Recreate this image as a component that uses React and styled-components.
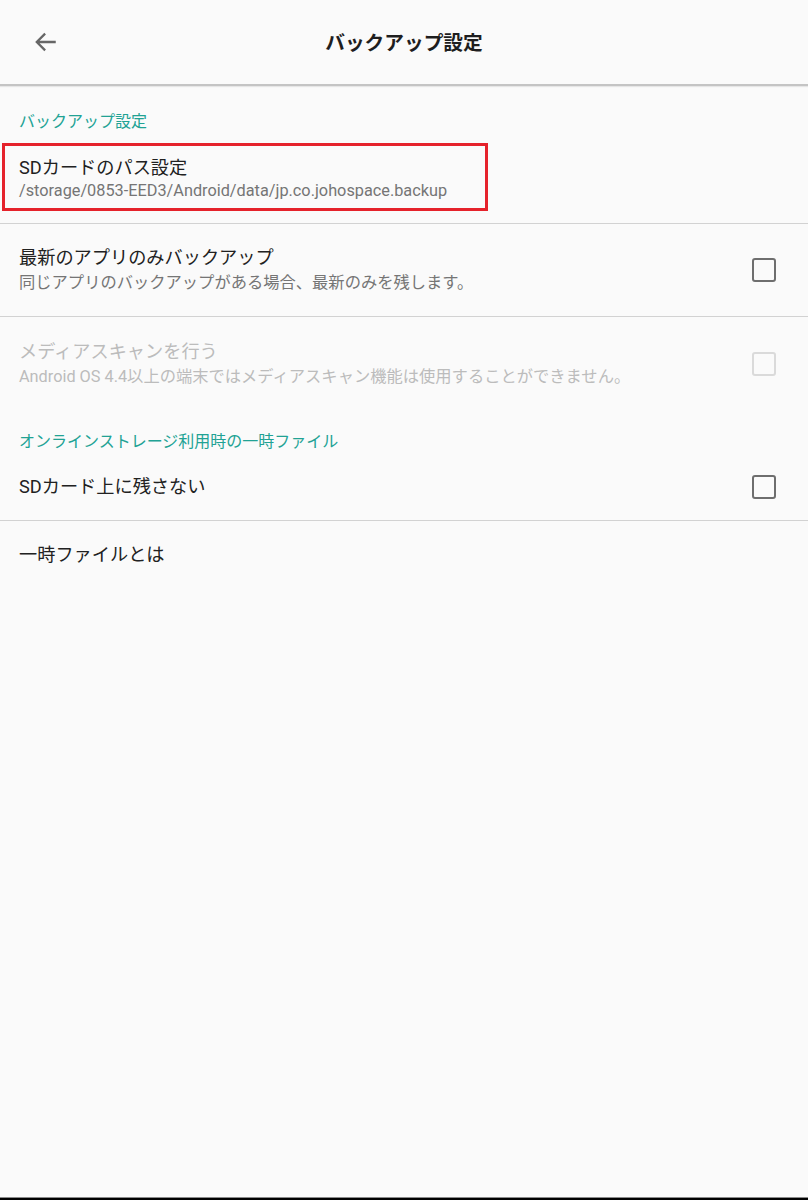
import React from "react";
import styled, { createGlobalStyle } from "styled-components";

const GlobalStyle = createGlobalStyle`
  html, body {
    margin: 0;
    padding: 0;
    background: #fafafa;
  }
  body {
    font-family: "Roboto", "Noto Sans CJK JP", sans-serif;
    color: #212121;
  }
`;

const Page = styled.div`
  min-height: 1200px;
  display: flex;
  flex-direction: column;
  background: #fafafa;
`;

const Toolbar = styled.header`
  height: 84px;
  display: flex;
  align-items: center;
  position: relative;
  border-bottom: 2px solid #c4c4c4;
  box-shadow: 0 1px 1px rgba(0, 0, 0, 0.08);
`;

const BackButton = styled.button`
  width: 48px;
  height: 48px;
  margin-left: 22px;
  padding: 0;
  border: none;
  background: none;
  display: flex;
  align-items: center;
  justify-content: center;
  color: #666;
`;

const Title = styled.h1`
  position: absolute;
  left: 0;
  right: 0;
  top: 0;
  bottom: 0;
  margin: 0;
  display: flex;
  align-items: center;
  justify-content: center;
  padding-bottom: 2px;
  font-size: 19.7px;
  font-weight: 700;
  color: #1e1e1e;
  pointer-events: none;
`;

const Content = styled.main`
  flex: 1;
  display: flex;
  flex-direction: column;
`;

const Category = styled.div`
  padding: ${(p) => p.$top}px 19px 0;
  font-size: 16px;
  line-height: 20px;
  color: #21a294;
`;

const Item = styled.div`
  display: flex;
  align-items: center;
  padding: ${(p) => p.$top}px 32px ${(p) => p.$bottom}px 19px;
  border-bottom: ${(p) => (p.$divider ? "1px solid #d2d2d2" : "none")};
`;

const Highlight = styled.div`
  box-sizing: border-box;
  margin: 11px 0 12px 2px;
  width: 486px;
  padding: 10px 0 6px 14px;
  border: 3px solid #e5222b;
`;

const Divider = styled.div`
  height: 1px;
  background: #d2d2d2;
`;

const Texts = styled.div`
  flex: 1;
  display: flex;
  flex-direction: column;
  gap: ${(p) => (p.$gap ? p.$gap : 0)}px;
`;

const ItemTitle = styled.div`
  font-size: 18.2px;
  line-height: 24px;
  color: ${(p) => (p.$disabled ? "#bcbcbc" : "#212121")};
`;

const Summary = styled.div`
  font-size: 16.3px;
  line-height: 22px;
  color: ${(p) => (p.$disabled ? "#bcbcbc" : "#757575")};
`;

const Checkbox = styled.span`
  box-sizing: border-box;
  width: 24px;
  height: 24px;
  border: 2.5px solid ${(p) => (p.$disabled ? "#dadada" : "#6e6e6e")};
  border-radius: 3px;
  flex-shrink: 0;
`;

const BottomEdge = styled.div`
  height: 3px;
  border-top: 1px solid #8a8a8a;
  background: #000;
  box-sizing: border-box;
`;

const ArrowBack = () => (
  <svg width="26" height="26" viewBox="0 0 24 24" fill="none">
    <path
      d="M21 12H3.5M11.2 4.3 3.5 12l7.7 7.7"
      stroke="currentColor"
      strokeWidth="2.1"
    />
  </svg>
);

export default function App() {
  return (
    <>
      <GlobalStyle />
      <Page>
        <Toolbar>
          <BackButton aria-label="戻る">
            <ArrowBack />
          </BackButton>
          <Title>バックアップ設定</Title>
        </Toolbar>
        <Content>
          <Category $top={26}>バックアップ設定</Category>
          <Highlight>
            <ItemTitle>SDカードのパス設定</ItemTitle>
            <Summary>/storage/0853-EED3/Android/data/jp.co.johospace.backup</Summary>
          </Highlight>
          <Divider />
          <Item $top={22} $bottom={22} $divider>
            <Texts $gap={2}>
              <ItemTitle>最新のアプリのみバックアップ</ItemTitle>
              <Summary>同じアプリのバックアップがある場合、最新のみを残します。</Summary>
            </Texts>
            <Checkbox />
          </Item>
          <Item $top={23} $bottom={22}>
            <Texts $gap={2}>
              <ItemTitle $disabled>メディアスキャンを行う</ItemTitle>
              <Summary $disabled>
                Android OS 4.4以上の端末ではメディアスキャン機能は使用することができません。
              </Summary>
            </Texts>
            <Checkbox $disabled />
          </Item>
          <Category $top={22}>オンラインストレージ利用時の一時ファイル</Category>
          <Item $top={23} $bottom={21} $divider>
            <Texts>
              <ItemTitle>SDカード上に残さない</ItemTitle>
            </Texts>
            <Checkbox />
          </Item>
          <Item $top={22} $bottom={21}>
            <Texts>
              <ItemTitle>一時ファイルとは</ItemTitle>
            </Texts>
          </Item>
        </Content>
        <BottomEdge />
      </Page>
    </>
  );
}
